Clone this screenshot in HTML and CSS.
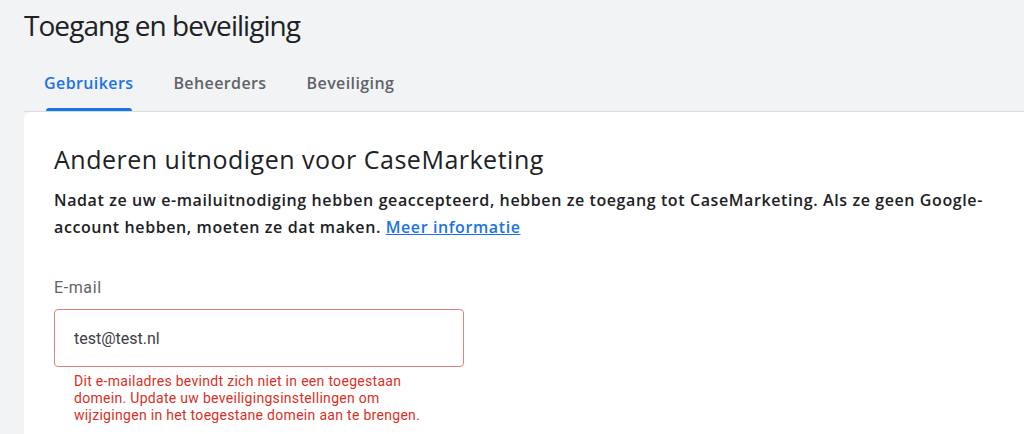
FILE: index.html
```html
<!DOCTYPE html>
<html lang="nl">
<head>
<meta charset="utf-8">
<title>Toegang en beveiliging</title>
<link rel="stylesheet" href="styles.css">
</head>
<body>
<div class="page">
  <h1 class="page-title">Toegang en beveiliging</h1>
  <nav class="tabs">
    <a class="tab tab-active">Gebruikers</a>
    <a class="tab">Beheerders</a>
    <a class="tab">Beveiliging</a>
  </nav>
  <section class="card">
    <h2 class="card-title">Anderen uitnodigen voor CaseMarketing</h2>
    <p class="card-text">Nadat ze uw e-mailuitnodiging hebben geaccepteerd, hebben ze toegang tot CaseMarketing. Als ze geen Google-<br>account hebben, moeten ze dat maken. <a class="link" href="#">Meer informatie</a></p>
    <div class="field">
      <label class="field-label">E-mail</label>
      <div class="field-input">test@test.nl</div>
      <p class="field-error">Dit e-mailadres bevindt zich niet in een toegestaan domein. Update uw beveiligingsinstellingen om wijzigingen in het toegestane domein aan te brengen.</p>
    </div>
  </section>
</div>
</body>
</html>
```

FILE: styles.css
```css
* { box-sizing: border-box; }
html, body { margin: 0; padding: 0; }
body {
  background: #f1f3f4;
  font-family: "Open Sans", "Noto Sans", sans-serif;
  color: #202124;
  overflow: hidden;
  height: 100vh;
}
.page {
  padding-left: 24px;
  height: 100%;
  display: flex;
  flex-direction: column;
}
.page-title {
  margin: 0;
  padding-top: 7px;
  height: 56px;
  font-size: 28px;
  line-height: 36px;
  font-weight: 400;
  color: #202124;
  letter-spacing: -0.95px;
}
.tabs {
  display: flex;
  gap: 40px;
  padding-left: 20px;
  border-bottom: 1px solid #dadce0;
}
.tab {
  position: relative;
  padding: 17px 0 18px;
  font-size: 16px;
  line-height: 20px;
  font-weight: 600;
  letter-spacing: 0.4px;
  color: #5f6368;
  cursor: pointer;
}
.tab-active {
  color: #1a73e8;
}
.tab-active::after {
  content: "";
  position: absolute;
  left: 2px;
  right: 1px;
  bottom: 0;
  height: 3px;
  background: #1a73e8;
  border-radius: 3px 3px 0 0;
}
.card {
  flex: 1;
  background: #fff;
  border-radius: 8px 0 0 0;
  padding: 31px 30px 0;
}
.card-title {
  margin: 0;
  font-size: 25px;
  line-height: 32px;
  font-weight: 400;
  letter-spacing: 0.5px;
  color: #202124;
}
.card-text {
  margin: 12px 0 0;
  font-size: 16px;
  line-height: 27px;
  font-weight: 600;
  letter-spacing: 0.6px;
  color: #202124;
}
.link {
  color: #1a73e8;
  text-decoration: underline;
}
.field {
  margin-top: 35px;
  width: 410px;
}
.field-label {
  display: block;
  font-family: Roboto, "Noto Sans", sans-serif;
  font-size: 16px;
  line-height: 24px;
  letter-spacing: 0.6px;
  color: #5f6368;
}
.field-input {
  margin-top: 9px;
  height: 58px;
  border: 1px solid #e4817a;
  border-radius: 4px;
  padding: 0 19px;
  display: flex;
  align-items: center;
  font-family: Roboto, "Noto Sans", sans-serif;
  font-size: 16px;
  color: #3c4043;
}
.field-error {
  margin: 6px 0 0;
  padding: 0 30px 0 20px;
  font-family: Roboto, "Noto Sans", sans-serif;
  font-size: 14px;
  line-height: 17px;
  letter-spacing: 0.3px;
  color: #d93025;
}
```
